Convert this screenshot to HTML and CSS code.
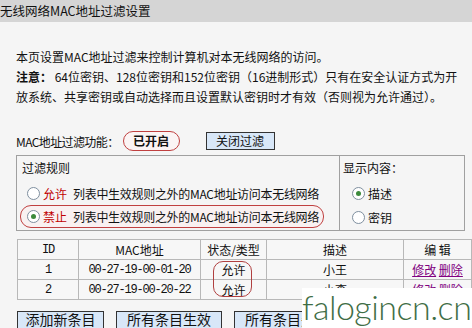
FILE: index.html
```html
<!DOCTYPE html>
<html lang="zh-CN">
<head>
    <meta charset="UTF-8">
    <title>无线网络MAC地址过滤设置</title>
    <link rel="stylesheet" href="styles.css">
</head>
<body>

    <div class="title-bar">无线网络MAC地址过滤设置</div>

    <div class="page">
        <p class="intro">本页设置MAC地址过滤来控制计算机对本无线网络的访问。<br>
        <b>注意：</b> 64位密钥、128位密钥和152位密钥（16进制形式）只有在安全认证方式为开<br>放系统、共享密钥或自动选择而且设置默认密钥时才有效（否则视为允许通过）。</p>

        <div class="switch-row">
            <span class="label">MAC地址过滤功能：</span>
            <span class="state">已开启</span>
            <span class="btn">关闭过滤</span>
        </div>

        <div class="rules">
            <div class="rules-left">
                <div class="rules-head">过滤规则</div>
                <div class="rule"><span class="radio"></span><span class="red">允许</span><span class="rule-text">列表中生效规则之外的MAC地址访问本无线网络</span></div>
                <div class="rule marked"><span class="radio on"></span><span class="red">禁止</span><span class="rule-text">列表中生效规则之外的MAC地址访问本无线网络</span></div>
            </div>
            <div class="rules-right">
                <div class="rules-head">显示内容：</div>
                <div class="rule"><span class="radio on"></span>描述</div>
                <div class="rule"><span class="radio"></span>密钥</div>
            </div>
        </div>

        <div class="table-wrap">
            <table class="list">
                <tr>
                    <th class="c-id mono">ID</th>
                    <th class="c-mac">MAC地址</th>
                    <th class="c-state">状态/类型</th>
                    <th class="c-desc">描述</th>
                    <th class="c-edit">编 辑</th>
                </tr>
                <tr>
                    <td class="mono">1</td>
                    <td class="mono">00-27-19-00-01-20</td>
                    <td>允许</td>
                    <td>小王</td>
                    <td><a href="#">修改</a> <a href="#">删除</a></td>
                </tr>
                <tr>
                    <td class="mono">2</td>
                    <td class="mono">00-27-19-00-20-22</td>
                    <td>允许</td>
                    <td>小李</td>
                    <td><a href="#">修改</a> <a href="#">删除</a></td>
                </tr>
            </table>
            <div class="state-mark"></div>
        </div>

        <div class="actions">
            <span class="btn big b1">添加新条目</span>
            <span class="btn big b2">所有条目生效</span>
            <span class="btn big b3">所有条目失效</span>
        </div>
    </div>

    <div class="watermark">falogincn.cn</div>

</body>
</html>
```

FILE: styles.css
```css
body {
    margin: 0;
    padding: 0;
    width: 472px;
    height: 328px;
    overflow: hidden;
    position: relative;
    background-color: #f5f5f5;
    font-family: "Noto Sans CJK SC", "DejaVu Sans", sans-serif;
    font-size: 12px;
    color: #111;
}

.title-bar {
    height: 22px;
    line-height: 21px;
    background: #d5d5d5;
    font-size: 12.5px;
    padding-left: 0;
}

.page {
    padding-left: 16px;
}

.intro {
    margin: 25px 0 0 0;
    line-height: 20px;
}

.intro b {
    font-weight: bold;
}

.switch-row {
    display: flex;
    align-items: center;
    height: 22px;
    margin-top: 23px;
}

.label {
    letter-spacing: -0.6px;
    white-space: nowrap;
}

.state {
    margin-left: 4px;
    width: 55px;
    height: 18px;
    line-height: 18px;
    text-align: center;
    font-weight: bold;
    border: 1px solid #c04040;
    border-radius: 10px;
    background: #fbf4f4;
}

.btn {
    display: inline-block;
    background: #d8e7f8;
    border: 1px solid #333;
    text-align: center;
    white-space: nowrap;
}

.switch-row .btn {
    margin-left: 26px;
    width: 67px;
    height: 16px;
    line-height: 16px;
}

.rules {
    display: flex;
    margin-top: 3px;
    width: 447px;
    border: 1px solid #a0a0a0;
}

.rules-left {
    width: 322px;
    flex-shrink: 0;
    border-right: 1px solid #a0a0a0;
    padding-top: 2px;
    padding-bottom: 2px;
}

.rules-right {
    flex: 1;
    padding-top: 2px;
}

.rules-head {
    height: 20px;
    line-height: 20px;
    padding-left: 5px;
    margin-bottom: 3px;
}

.rules-right .rules-head {
    padding-left: 3px;
}

.rule {
    display: flex;
    align-items: center;
    height: 24px;
    padding-left: 10px;
    white-space: nowrap;
}

.rule-text {
    letter-spacing: -0.3px;
}

.rules-right .rule {
    padding-left: 12px;
}

.rule.marked {
    margin-left: 3px;
    margin-right: 15px;
    height: 21px;
    padding-left: 6px;
    border: 1px solid #c04040;
    border-radius: 11px;
    background: #f9f1f1;
}

.radio {
    flex-shrink: 0;
    width: 11px;
    height: 11px;
    border: 1px solid #7f8f9f;
    border-radius: 50%;
    background: #fff;
    margin-right: 3px;
    position: relative;
}

.radio.on::after {
    content: "";
    position: absolute;
    left: 3px;
    top: 3px;
    width: 5px;
    height: 5px;
    border-radius: 50%;
    background: #3c8a3c;
}

.red {
    flex-shrink: 0;
    color: #c00000;
    margin-right: 6px;
}

.table-wrap {
    position: relative;
    margin-top: 8px;
    margin-left: 1px;
}

.list {
    border-collapse: collapse;
    width: 455px;
    background: #f7f7f7;
}

.list th,
.list td {
    border: 1px solid #b8b8b8;
    height: 19px;
    padding: 0;
    text-align: center;
    font-weight: normal;
    line-height: 18px;
    white-space: nowrap;
}

.c-id { width: 60px; }
.c-mac { width: 121px; }
.c-state { width: 65px; }
.c-desc { width: 136px; }

.list .mono {
    font-family: "Liberation Mono", "DejaVu Sans Mono", monospace;
    font-size: 12px;
    letter-spacing: -1.2px;
}

.list a {
    color: #800080;
}

.state-mark {
    position: absolute;
    left: 196px;
    top: 22px;
    width: 37px;
    height: 34px;
    border: 1px solid #b04040;
    border-radius: 10px;
}

.actions {
    display: flex;
    margin-top: 11px;
    margin-left: 1px;
}

.btn.big {
    height: 16px;
    line-height: 14px;
    font-size: 14px;
    margin-right: 12px;
}

.b1 { width: 85px; }
.b2 { width: 104px; margin-right: 10px; }
.b3 { width: 104px; }

.watermark {
    position: absolute;
    left: 302px;
    top: 288px;
    right: 0;
    bottom: 0;
    background: #fff;
    color: #3f6e46;
    font-family: Lato, "DejaVu Sans", sans-serif;
    font-weight: 300;
    font-size: 34px;
    line-height: 38px;
    letter-spacing: -0.5px;
}
```
